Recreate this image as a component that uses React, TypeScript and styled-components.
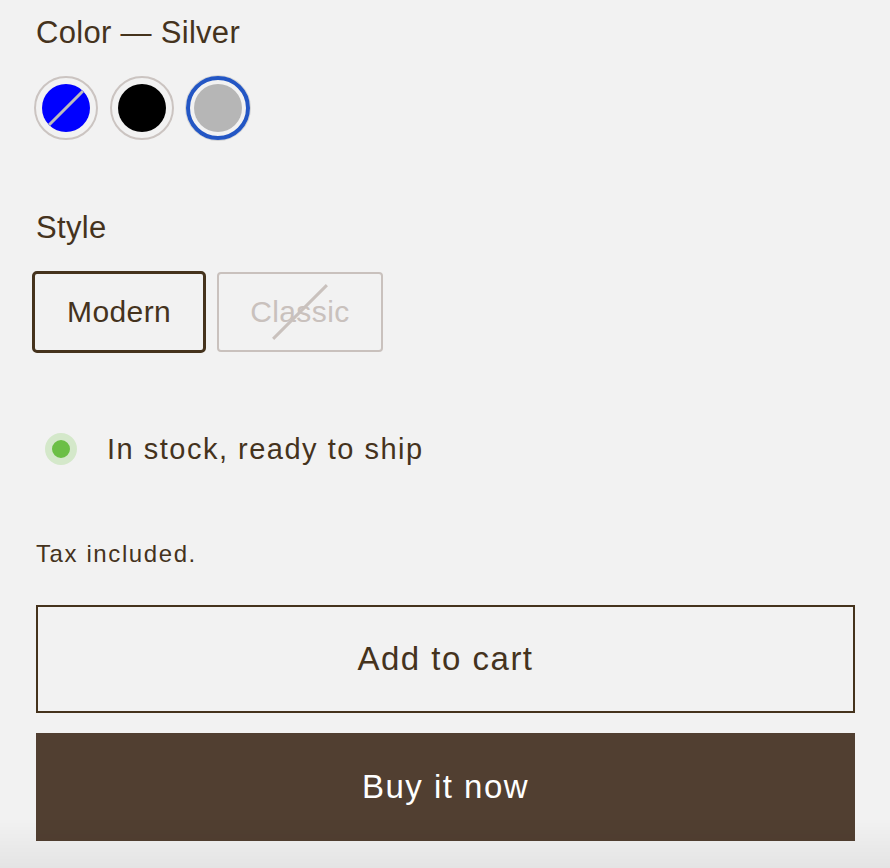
import styled, { createGlobalStyle, css } from 'styled-components';

const GlobalStyle = createGlobalStyle`
  * { box-sizing: border-box; }
  html, body {
    margin: 0;
    padding: 0;
    background: #f2f2f2;
  }
  body {
    font-family: "Liberation Sans", Arial, sans-serif;
    color: #45331d;
    -webkit-font-smoothing: antialiased;
  }
`;

const colors = [
  { name: 'Blue', value: '#0000ff', soldOut: true },
  { name: 'Black', value: '#000000' },
  { name: 'Silver', value: '#b6b6b6' },
];

const styles = [
  { name: 'Modern', available: true },
  { name: 'Classic', available: false },
];

function App() {
  const selectedColor = 'Silver';
  const selectedStyle = 'Modern';

  return (
    <>
      <GlobalStyle />
      <Page>
        <Fieldset>
          <Legend>Color — {selectedColor}</Legend>
          <SwatchRow>
            {colors.map((c) => (
              <Swatch key={c.name} $selected={c.name === selectedColor} aria-label={c.name}>
                <SwatchFill $color={c.value}>{c.soldOut && <Slash />}</SwatchFill>
              </Swatch>
            ))}
          </SwatchRow>
        </Fieldset>

        <Fieldset $spaced>
          <Legend>Style</Legend>
          <PillRow>
            {styles.map((s) => (
              <Pill key={s.name} $selected={s.name === selectedStyle} $disabled={!s.available}>
                {s.name}
              </Pill>
            ))}
          </PillRow>
        </Fieldset>

        <Stock>
          <StockDot />
          In stock, ready to ship
        </Stock>

        <Tax>Tax included.</Tax>

        <Actions>
          <CartButton>Add to cart</CartButton>
          <BuyButton>Buy it now</BuyButton>
        </Actions>
      </Page>
      <BottomShade />
    </>
  );
}

export default App;

const Page = styled.div`
  padding: 13px 35px 0 36px;
`;

const Fieldset = styled.div<{ $spaced?: boolean }>`
  margin-top: ${(p) => (p.$spaced ? '68px' : '0')};
`;

const Legend = styled.div`
  font-size: 31px;
  line-height: 40px;
  letter-spacing: 0.3px;
  margin-bottom: 23px;
`;

const SwatchRow = styled.div`
  display: flex;
  gap: 12px;
  margin-left: -2px;
`;

const Swatch = styled.button<{ $selected?: boolean }>`
  width: 64px;
  height: 64px;
  padding: 0;
  border-radius: 50%;
  border: 2px solid #cbc4c1;
  background: transparent;
  display: grid;
  place-items: center;
  cursor: pointer;
  ${(p) =>
    p.$selected &&
    css`
      border: 4px solid #2356c4;
      box-shadow: 0 0 0 1px #d4d4d4;
    `}
`;

const SwatchFill = styled.span<{ $color: string }>`
  position: relative;
  display: block;
  width: 48px;
  height: 48px;
  border-radius: 50%;
  background: ${(p) => p.$color};
  overflow: hidden;
`;

const Slash = styled.span`
  position: absolute;
  left: 50%;
  top: 50%;
  width: 3px;
  height: 48px;
  background: #bdbdbd;
  transform: translate(-50%, -50%) rotate(45deg);
`;

const PillRow = styled.div`
  display: flex;
  align-items: center;
  gap: 11px;
  margin-left: -4px;
`;

const Pill = styled.button<{ $selected?: boolean; $disabled?: boolean }>`
  position: relative;
  height: 80px;
  padding: 0 31px;
  font: inherit;
  font-size: 30px;
  letter-spacing: 0.4px;
  background: transparent;
  border: 2px solid #c9c1bd;
  border-radius: 4px;
  color: #45331d;
  cursor: pointer;
  ${(p) =>
    p.$selected &&
    css`
      height: 82px;
      padding: 0 32px;
      border: 3px solid #45331d;
      border-radius: 5px;
    `}
  ${(p) =>
    p.$disabled &&
    css`
      color: #c9c1bd;
      &::after {
        content: '';
        position: absolute;
        left: 50%;
        top: 50%;
        width: 3px;
        height: 76px;
        background: #c9c1bd;
        transform: translate(-50%, -50%) rotate(45deg);
      }
    `}
`;

const Stock = styled.div`
  display: flex;
  align-items: center;
  margin-top: 76px;
  height: 40px;
  font-size: 29px;
  letter-spacing: 1.5px;
  padding-left: 9px;
`;

const StockDot = styled.span`
  width: 32px;
  height: 32px;
  border-radius: 50%;
  background: #6cbf46;
  border: 7px solid #d4e8ca;
  margin-right: 30px;
  flex-shrink: 0;
`;

const Tax = styled.div`
  margin-top: 70px;
  font-size: 24px;
  line-height: 30px;
  letter-spacing: 1.6px;
`;

const Actions = styled.div`
  display: flex;
  flex-direction: column;
  gap: 20px;
  margin-top: 36px;
`;

const ActionButton = styled.button`
  width: 100%;
  height: 108px;
  font: inherit;
  font-size: 33px;
  letter-spacing: 1.5px;
  cursor: pointer;
`;

const CartButton = styled(ActionButton)`
  background: transparent;
  color: #45331d;
  border: 2px solid #45331d;
`;

const BuyButton = styled(ActionButton)`
  background: #513f31;
  color: #ffffff;
  border: none;
`;

const BottomShade = styled.div`
  position: fixed;
  left: 0;
  right: 0;
  bottom: 0;
  height: 50px;
  background: linear-gradient(rgba(0, 0, 0, 0), rgba(0, 0, 0, 0.055));
  pointer-events: none;
`;
